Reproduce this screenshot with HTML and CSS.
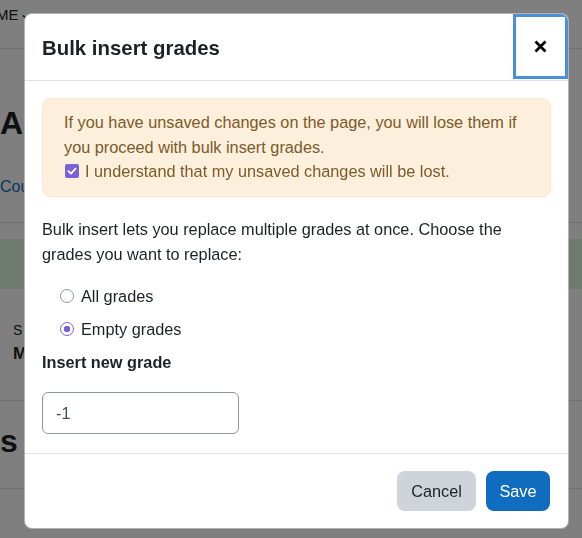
FILE: index.html
```html
<!DOCTYPE html>
<html lang="en">
<head>
<meta charset="utf-8">
<title>Bulk insert grades</title>
<link rel="stylesheet" href="styles.css">
</head>
<body>
<div class="page">
  <div class="topbar"><span class="nav">ME<svg class="caret" width="8" height="6" viewBox="0 0 8 6"><path d="M1 1.5 L4 4.5 L7 1.5" fill="none" stroke="#1d2125" stroke-width="1.4"/></svg></span></div>
  <div class="titlearea">
    <h1 class="pagetitle">Ac</h1>
    <a class="crumb" href="#">Cou</a>
  </div>
  <div class="band"></div>
  <div class="info">
    <div class="small">S</div>
    <div class="strong">M</div>
  </div>
  <div class="sect"><h2 class="secttitle">s</h2></div>
</div>

<div class="backdrop">
  <div class="modal" role="dialog">
    <div class="modal-header">
      <h5 class="modal-title">Bulk insert grades</h5>
      <button class="close" aria-label="Close">
        <svg width="13" height="13" viewBox="0 0 13 13"><path d="M1.5 1.5 L11.5 11.5 M11.5 1.5 L1.5 11.5" stroke="#000" stroke-width="2.7" stroke-linecap="butt"/></svg>
      </button>
    </div>
    <div class="modal-body">
      <div class="alert">
        <div>If you have unsaved changes on the page, you will lose them if you proceed with bulk insert grades.</div>
        <label class="ack"><span class="check"><svg width="14" height="14" viewBox="0 0 14 14"><path d="M3.4 7.2 L5.9 9.6 L10.6 4.6" fill="none" stroke="#fff" stroke-width="1.8" stroke-linecap="round" stroke-linejoin="round"/></svg></span>I understand that my unsaved changes will be lost.</label>
      </div>
      <p class="intro">Bulk insert lets you replace multiple grades at once. Choose the grades you want to replace:</p>
      <div class="radios">
        <label class="radio"><span class="dot"></span>All grades</label>
        <label class="radio"><span class="dot on"></span>Empty grades</label>
      </div>
      <div class="fieldlabel">Insert new grade</div>
      <div class="input">-1</div>
    </div>
    <div class="modal-footer">
      <button class="btn btn-secondary">Cancel</button>
      <button class="btn btn-primary">Save</button>
    </div>
  </div>
</div>
</body>
</html>
```
FILE: styles.css
```css
* { box-sizing: border-box; }
html, body { margin: 0; padding: 0; }
body {
  font-family: "Liberation Sans", Arial, sans-serif;
  color: #1d2125;
  background: #fff;
  width: 582px;
  height: 538px;
  overflow: hidden;
}
.page { width: 582px; }
.topbar {
  height: 49px;
  border-bottom: 1px solid #dee2e6;
  padding-top: 5px;
}
.nav { font-size: 15px; line-height: 20px; display: flex; align-items: center; gap: 3px; margin-left: -4px; }
.caret { margin-top: 3px; }
.titlearea {
  height: 174px;
  border-bottom: 1px solid #dee2e6;
  padding-top: 54px;
}
.pagetitle {
  margin: 0;
  font-size: 32px;
  line-height: 40px;
  font-weight: 700;
}
.crumb {
  display: block;
  margin-top: 35px;
  color: #0f6cbf;
  text-decoration: none;
  font-size: 16px;
}
.band {
  height: 50px;
  margin-top: 16px;
  background: #dcf4dc;
}
.info {
  height: 112px;
  border-bottom: 1px solid #dee2e6;
  padding: 32px 0 0 13px;
}
.small { font-size: 14px; line-height: 18px; }
.strong { font-size: 17px; font-weight: 700; line-height: 22px; margin-top: 4px; }
.sect {
  height: 88px;
  border-bottom: 1px solid #dee2e6;
  padding-top: 20px;
}
.secttitle { margin: 0; font-size: 32px; line-height: 40px; font-weight: 700; }

.backdrop {
  position: fixed;
  inset: 0;
  background: rgba(0, 0, 0, 0.5);
  padding: 13px 0 0 24px;
}
.modal {
  width: 545px;
  height: 516px;
  background: #fff;
  border: 1px solid rgba(0, 0, 0, 0.3);
  border-radius: 8px;
  display: flex;
  flex-direction: column;
  overflow: hidden;
}
.modal-header {
  display: flex;
  align-items: stretch;
  justify-content: space-between;
  border-bottom: 1px solid #dee2e6;
  height: 67px;
  padding-left: 17px;
}
.modal-title {
  margin: 0;
  align-self: center;
  font-size: 20.4px;
  font-weight: 700;
  line-height: 24px;
  padding-top: 1px;
}
.close {
  width: 55px;
  height: 65px;
  margin-top: 0;
  background: #fff;
  border: 3px solid #4a90d6;
  padding: 0 0 1px 0;
  display: flex;
  align-items: center;
  justify-content: center;
  cursor: pointer;
}
.modal-body {
  flex: 1;
  padding: 17px 17px 0 17px;
  font-size: 16.3px;
  line-height: 25px;
}
.alert {
  background: #fcefdc;
  color: #7d5a29;
  border: 1px solid #fbe8cd;
  border-radius: 8px;
  padding: 11px 20px 12px 21px;
  line-height: 24.5px;
}
.ack { display: flex; align-items: center; }
.check {
  width: 14px;
  height: 14px;
  background: #7b61d9;
  border-radius: 2px;
  margin: 0 6px 0 1px;
  display: flex;
}
.intro { margin: 20px 0 0 0; }
.radios { margin-top: 17px; padding-left: 18px; }
.radio { display: flex; align-items: center; height: 25px; margin-bottom: 8px; }
.dot {
  width: 14px;
  height: 14px;
  border-radius: 50%;
  border: 1.5px solid #8f959e;
  margin-right: 7px;
  background: #fff;
}
.dot.on {
  border-color: #7b61d9;
  background: radial-gradient(circle, #7b61d9 0 3px, #fff 3.5px);
}
.fieldlabel { font-weight: 700; margin-top: 2px; }
.input {
  margin-top: 17px;
  width: 197px;
  height: 42px;
  border: 1px solid #8f959e;
  border-radius: 6px;
  padding: 8px 13px;
  color: #495057;
}
.modal-footer {
  border-top: 1px solid #dee2e6;
  height: 75px;
  display: flex;
  justify-content: flex-end;
  align-items: flex-start;
  gap: 10px;
  padding: 17px 18px 0 0;
}
.btn {
  font-family: "Liberation Sans", Arial, sans-serif;
  font-size: 16.3px;
  height: 40px;
  border: none;
  border-radius: 8px;
  padding: 0 10px;
  cursor: pointer;
}
.btn-secondary { background: #ced4da; color: #1d2125; width: 79px; }
.btn-primary { background: #0f6cbf; color: #fff; width: 64px; }
```
